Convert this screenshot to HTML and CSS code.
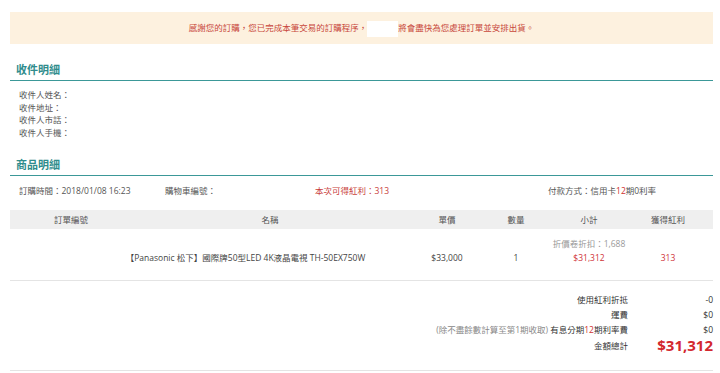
FILE: index.html
```html
<!DOCTYPE html>
<html lang="zh-Hant">
<head>
    <meta charset="UTF-8">
    <meta name="viewport" content="width=device-width, initial-scale=1.0">
    <title>訂購完成</title>
    <link rel="stylesheet" href="styles.css">
</head>
<body>

    <div class="page">

        <!-- Thank you notice -->
        <div class="notice">
            感謝您的訂購，您已完成本筆交易的訂購程序，<span class="notice-mask"></span>將會盡快為您處理訂單並安排出貨。
        </div>

        <!-- Recipient -->
        <div class="section">
            <h2 class="section-title">收件明細</h2>
            <ul class="recipient-list">
                <li>收件人姓名：</li>
                <li>收件地址：</li>
                <li>收件人市話：</li>
                <li>收件人手機：</li>
            </ul>
        </div>

        <!-- Products -->
        <div class="section section-products">
            <h2 class="section-title">商品明細</h2>
            <div class="order-info">
                <span class="info-time">訂購時間：2018/01/08 16:23</span>
                <span class="info-cart">購物車編號：</span>
                <span class="info-bonus">本次可得紅利：313</span>
                <span class="info-pay">付款方式：信用卡<em>12</em>期0利率</span>
            </div>

            <div class="order-table">
                <div class="table-head">
                    <div>訂單編號</div>
                    <div>名稱</div>
                    <div>單價</div>
                    <div>數量</div>
                    <div>小計</div>
                    <div>獲得紅利</div>
                </div>
                <div class="table-row">
                    <div class="cell-name">【Panasonic 松下】國際牌50型LED 4K液晶電視 TH-50EX750W</div>
                    <div>$33,000</div>
                    <div>1</div>
                    <div class="cell-subtotal">
                        <span class="coupon">折價卷折扣：1,688</span>
                        <span class="red">$31,312</span>
                    </div>
                    <div class="red">313</div>
                </div>
            </div>

            <div class="summary">
                <div class="summary-label">使用紅利折抵</div>
                <div class="summary-value">-0</div>
                <div class="summary-label">運費</div>
                <div class="summary-value">$0</div>
                <div class="summary-label"><span class="note">(除不盡餘數計算至第1期收取)</span> 有息分期<em>12</em>期利率費</div>
                <div class="summary-value">$0</div>
                <div class="summary-label total-label">金額總計</div>
                <div class="summary-value total-value">$31,312</div>
            </div>
        </div>

    </div>

</body>
</html>
```

FILE: styles.css
```css
/* Global */
body {
    margin: 0;
    padding: 0;
    background-color: #ffffff;
    font-family: 'Open Sans', 'Noto Sans CJK TC', sans-serif;
    font-size: 8.5px;
    color: #555;
}

.page {
    width: 703px;
    margin-left: 10px;
    padding-top: 12px;
}

/* Notice bar */
.notice {
    height: 32px;
    line-height: 32px;
    background-color: #fdf1df;
    color: #c8473b;
    text-align: center;
    white-space: nowrap;
}

.notice-mask {
    display: inline-block;
    width: 31px;
    height: 16px;
    background-color: #ffffff;
    vertical-align: middle;
}

/* Sections */
.section {
    margin-top: 19px;
}

.section-products {
    margin-top: 19px;
}

.section-title {
    margin: 0;
    padding: 0 0 3px 6px;
    font-size: 11px;
    line-height: 14px;
    font-weight: bold;
    color: #2f8c8c;
    border-bottom: 1.5px solid #3b9898;
}

.recipient-list {
    list-style: none;
    margin: 0;
    padding: 8px 0 0 9px;
}

.recipient-list li {
    line-height: 12.6px;
}

/* Order info line */
.order-info {
    display: flex;
    padding: 8px 0 0 9px;
    line-height: 13px;
}

.info-time {
    width: 146px;
}

.info-cart {
    width: 150px;
}

.info-bonus {
    width: 233px;
    color: #c9413c;
}

.order-info em,
.summary em {
    font-style: normal;
    color: #d0312f;
}

/* Product table */
.order-table {
    margin-top: 13px;
    border-bottom: 1px solid #e4e4e4;
}

.table-head,
.table-row {
    display: grid;
    grid-template-columns: 122px 276px 78px 60px 86px 72px;
    text-align: center;
}

.table-head {
    height: 19px;
    line-height: 19px;
    background-color: #efefef;
    color: #555;
}

.table-row {
    padding: 8px 0 15px;
    line-height: 14px;
    align-items: end;
    color: #444;
}

.cell-name {
    grid-column: 1 / 3;
    padding-left: 73px;
    white-space: nowrap;
}

.cell-subtotal {
    display: flex;
    flex-direction: column;
}

.coupon {
    color: #999;
}

.red {
    color: #d0343a;
}

/* Summary */
.summary {
    display: grid;
    grid-template-columns: 1fr 85px;
    padding: 11px 0 16px;
    border-bottom: 1px solid #e4e4e4;
    line-height: 15px;
    text-align: right;
    color: #333;
}

.note {
    color: #888;
}

.total-label,
.total-value {
    line-height: 17px;
}

.total-value {
    font-size: 15px;
    font-weight: bold;
    color: #d3282e;
}
```
